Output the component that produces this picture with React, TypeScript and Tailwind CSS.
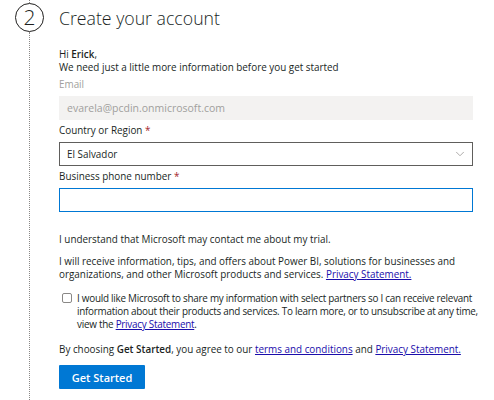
import { ChevronDown } from "lucide-react";

const App = () => {
  return (
    <div className="w-[494px] h-[400px] bg-white overflow-hidden flex font-['Open_Sans',sans-serif] text-[#201f1e]">
      {/* Step rail */}
      <div className="w-[59px] shrink-0 flex flex-col items-center">
        <div className="h-[3px] border-l border-dotted border-[#8a8886]"></div>
        <div className="w-[29px] h-[29px] rounded-full border border-[#201f1e] flex items-center justify-center text-[21px] font-light leading-none">
          2
        </div>
        <div className="flex-1 border-l border-dotted border-[#8a8886]"></div>
      </div>

      {/* Form */}
      <div className="w-[414px] flex flex-col text-[9.9px] leading-[13px]">
        <h1 className="text-[17.7px] font-light leading-[26px] mt-[5px]">Create your account</h1>

        <p className="mt-[17px]">
          Hi <span className="font-semibold">Erick</span>,
        </p>
        <p>We need just a little more information before you get started</p>

        <label className="mt-[4px] text-[#a19f9d]">Email</label>
        <div className="mt-[5px] h-[24px] bg-[#f3f2f1] flex items-center px-[8px] text-[#a19f9d] text-[10.5px]">
          evarela@pcdin.onmicrosoft.com
        </div>

        <label className="mt-[4px]">
          Country or Region <span className="text-[#a4262c]">*</span>
        </label>
        <div className="mt-[5px] h-[24px] border border-[#605e5c] flex items-center justify-between pl-[7px] pr-[5px]">
          <span>El Salvador</span>
          <ChevronDown className="w-[14px] h-[14px] text-[#a19f9d]" strokeWidth={1.5} />
        </div>

        <label className="mt-[4px]">
          Business phone number <span className="text-[#a4262c]">*</span>
        </label>
        <div className="mt-[5px] h-[24px] border border-[#0078d4]"></div>

        <p className="mt-[21px]">I understand that Microsoft may contact me about my trial.</p>

        <p className="mt-[9px]">
          I will receive information, tips, and offers about Power BI, solutions for businesses and
          <br />
          organizations, and other Microsoft products and services.{" "}
          <a href="#" className="text-[#1a0dab] underline">
            Privacy Statement.
          </a>
        </p>

        <div className="mt-[11px] flex items-start gap-[5px] pl-[3px]">
          <div className="mt-[1px] w-[10px] h-[10px] shrink-0 rounded-[2px] border border-[#8a8886] bg-white"></div>
          <p className="tracking-[-0.25px] whitespace-nowrap">
            I would like Microsoft to share my information with select partners so I can receive relevant
            <br />
            information about their products and services. To learn more, or to unsubscribe at any time,
            <br />
            view the{" "}
            <a href="#" className="text-[#1a0dab] underline">
              Privacy Statement
            </a>
            .
          </p>
        </div>

        <p className="mt-[12px]">
          By choosing <span className="font-semibold">Get Started</span>, you agree to our{" "}
          <a href="#" className="text-[#1a0dab] underline">
            terms and conditions
          </a>{" "}
          and{" "}
          <a href="#" className="text-[#1a0dab] underline">
            Privacy Statement.
          </a>
        </p>

        <button className="mt-[9px] w-[86px] h-[24px] bg-[#0078d4] text-white font-semibold text-[11px] rounded-[1px]">
          Get Started
        </button>
      </div>
    </div>
  );
};

export default App;
